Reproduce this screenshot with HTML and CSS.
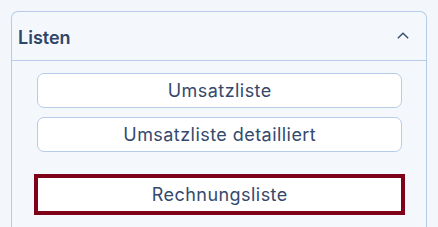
FILE: index.html
```html
<!DOCTYPE html>
<html lang="de">
<head>
    <meta charset="UTF-8">
    <title>Listen</title>
    <link rel="stylesheet" href="styles.css">
</head>
<body>
    <div class="panel">
        <div class="panel-header">
            <span class="panel-title">Listen</span>
            <svg class="chevron" width="12" height="7" viewBox="0 0 12 7">
                <path d="M0.8 6.2 L6 1.2 L11.2 6.2" fill="none" stroke="#34496b" stroke-width="1.3"/>
            </svg>
        </div>
        <div class="panel-body">
            <button class="list-button">Umsatzliste</button>
            <button class="list-button">Umsatzliste detailliert</button>
            <button class="list-button active spaced">Rechnungsliste</button>
        </div>
    </div>
</body>
</html>
```

FILE: styles.css
```css
* {
    margin: 0;
    padding: 0;
    box-sizing: border-box;
}

html, body {
    height: 100%;
    overflow: hidden;
}

body {
    background: #f3f6fb;
    font-family: Inter, 'Noto Sans', sans-serif;
    color: #2d4265;
    padding: 11px 11px 0 11px;
}

/* panel runs on below the visible frame, so no bottom edge */
.panel {
    width: 416px;
    height: 216px;
    border: 1.5px solid #b7cce8;
    border-bottom: none;
    border-radius: 7px 7px 0 0;
    background: #f4f7fc;
}

.panel-header {
    height: 49px;
    display: flex;
    align-items: center;
    justify-content: space-between;
    padding: 0 17px 0 6px;
    border-bottom: 1.5px solid #b7cce8;
}

.panel-title {
    font-size: 18px;
    font-weight: 600;
    color: #2f4669;
    padding-top: 2px;
}

.chevron {
    margin-top: -1px;
}

.panel-body {
    display: flex;
    flex-direction: column;
    padding: 12px 24px 0 24.5px;
    gap: 9px;
}

.list-button {
    height: 35px;
    padding-left: 1px;
    background: #ffffff;
    border: 1px solid #b7cce8;
    border-radius: 7px;
    font-family: inherit;
    font-size: 18px;
    letter-spacing: 0.45px;
    color: #34496d;
}

.list-button.spaced {
    margin-top: 16px;
}

.list-button.active {
    outline: 4px solid #7f0019;
    outline-offset: -1px;
    border-radius: 0;
}
```
